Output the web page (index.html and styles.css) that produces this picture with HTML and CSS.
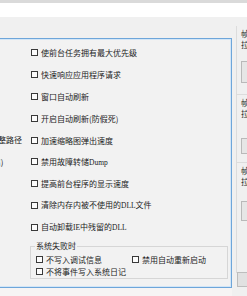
FILE: index.html
```html
<!DOCTYPE html>
<html lang="zh-CN">
<head>
<meta charset="utf-8">
<title>系统优化</title>
<link rel="stylesheet" href="styles.css">
</head>
<body>
<div class="topline"></div>
<div class="toolbar"></div>
<div class="main">
  <div class="leftcol">
    <div class="panel">
      <div class="side">
        <div class="frag">显示完整路径</div>
        <div class="frag">(需重启)</div>
      </div>
      <div class="opts">
        <label class="opt"><span class="cb"></span><span class="t">使前台任务拥有最大优先级</span></label>
        <label class="opt"><span class="cb"></span><span class="t">快速响应应用程序请求</span></label>
        <label class="opt"><span class="cb"></span><span class="t">窗口自动刷新</span></label>
        <label class="opt"><span class="cb"></span><span class="t">开启自动刷新(防假死)</span></label>
        <label class="opt"><span class="cb"></span><span class="t">加速缩略图弹出速度</span></label>
        <label class="opt"><span class="cb"></span><span class="t">禁用故障转储<span class="lat">Dump</span></span></label>
        <label class="opt"><span class="cb"></span><span class="t">提高前台程序的显示速度</span></label>
        <label class="opt"><span class="cb"></span><span class="t">清除内存内被不使用的<span class="lat">DLL</span>文件</span></label>
        <label class="opt"><span class="cb"></span><span class="t">自动卸载<span class="lat">IE</span>中残留的<span class="lat">DLL</span></span></label>
        <div class="group">
          <div class="legend">系统失败时</div>
          <div class="ggrid">
            <label class="gopt"><span class="cb"></span><span class="t">不写入调试信息</span></label>
            <label class="gopt"><span class="cb"></span><span class="t">禁用自动重新启动</span></label>
            <label class="gopt"><span class="cb"></span><span class="t">不将事件写入系统日记</span></label>
          </div>
        </div>
      </div>
    </div>
    <div class="below"></div>
  </div>
  <div class="strip">
    <div class="sgroup first">
      <div class="stxt">帧率</div>
      <div class="stxt">拉伸</div>
      <div class="sbox b1"></div>
    </div>
    <div class="sgroup">
      <div class="stxt">帧率</div>
      <div class="stxt">拉伸</div>
      <div class="sbox b2"></div>
    </div>
    <div class="sgroup last">
      <div class="stxt">帧率</div>
      <div class="stxt">拉伸</div>
      <div class="sbox b3"></div>
    </div>
    <div class="sbtn"></div>
  </div>
</div>
</body>
</html>
```
FILE: styles.css
```css
* { box-sizing: border-box; }
html, body { margin: 0; padding: 0; }
body {
  width: 247px;
  height: 296px;
  overflow: hidden;
  background: #f0f0f0;
  font-family: "Noto Sans CJK SC", "Noto Sans", sans-serif;
  font-size: 8px;
  color: #1c1c1c;
}
.topline { height: 3px; background: #dadada; }
.toolbar { height: 14px; background: #ffffff; }
.main { display: flex; height: 279px; }
.leftcol { width: 232px; display: flex; flex-direction: column; }
.panel {
  margin-top: 21px;
  height: 250px;
  border: 1px solid #6ea6da;
  border-left: none;
  background: #f2f2f2;
  box-shadow: inset -1px 1px 0 #d3e6f7, inset 0 -1px 0 #d3e6f7;
  display: flex;
  padding-top: 3px;
}
.below { flex: 1; background: #f6f4f4; }
.side {
  width: 61px;
  margin-left: -30px;
  flex: none;
  padding-top: 87px;
  padding-left: 4px;
}
.frag {
  height: 21.8px;
  line-height: 21.8px;
  white-space: nowrap;
  overflow: hidden;
}
.opts { display: flex; flex-direction: column; width: 197px; }
.opt {
  height: 21.8px;
  display: flex;
  align-items: center;
  gap: 2px;
  white-space: nowrap;
}
.t { line-height: 9px; white-space: nowrap; }
.cb {
  width: 7px;
  height: 7px;
  border: 1px solid #3a3a3a;
  background: #fcfcfc;
  flex: none;
  margin-right: 1px;
}
.lat { font-family: "Liberation Serif", serif; font-size: 7.5px; }
.group {
  margin-top: 8px;
  margin-left: -1px;
  border: 1px solid #d6d6d6;
  padding: 0 0 1px 5px;
}
.legend {
  margin-top: -6px;
  margin-left: -1px;
  width: max-content;
  padding: 0 1px;
  line-height: 9px;
  background: #f2f2f2;
}
.ggrid {
  margin-top: 3px;
  display: grid;
  grid-template-columns: 96px 1fr;
  grid-auto-rows: 12px;
}
.gopt {
  display: flex;
  align-items: center;
  gap: 2px;
  white-space: nowrap;
}
.strip {
  width: 15px;
  overflow: hidden;
  padding-left: 4px;
  display: flex;
  flex-direction: column;
}
.sgroup {
  border-left: 1px solid #dcdcdc;
  border-top: 1px solid #dcdcdc;
  padding-left: 4px;
  height: 68px;
  padding-top: 2px;
}
.sgroup.first { border-top: none; margin-top: 9px; height: 68px; }
.sgroup.last { height: 111px; }
.stxt {
  height: 11px;
  line-height: 11px;
  white-space: nowrap;
  font-size: 8px;
  color: #2a2a2a;
}
.sbox {
  margin-top: 11px;
  height: 22px;
  width: 20px;
  background: #e6e6e6;
  border: 1px solid #b9b9b9;
}
.b2 { margin-top: 19px; height: 16px; }
.b3 { margin-top: 14px; height: 20px; }
.sbtn {
  margin-top: -1px;
  height: 15px;
  width: 20px;
  margin-left: 1px;
  background: #e1e1e1;
  border: 1px solid #bdbdbd;
}
```
